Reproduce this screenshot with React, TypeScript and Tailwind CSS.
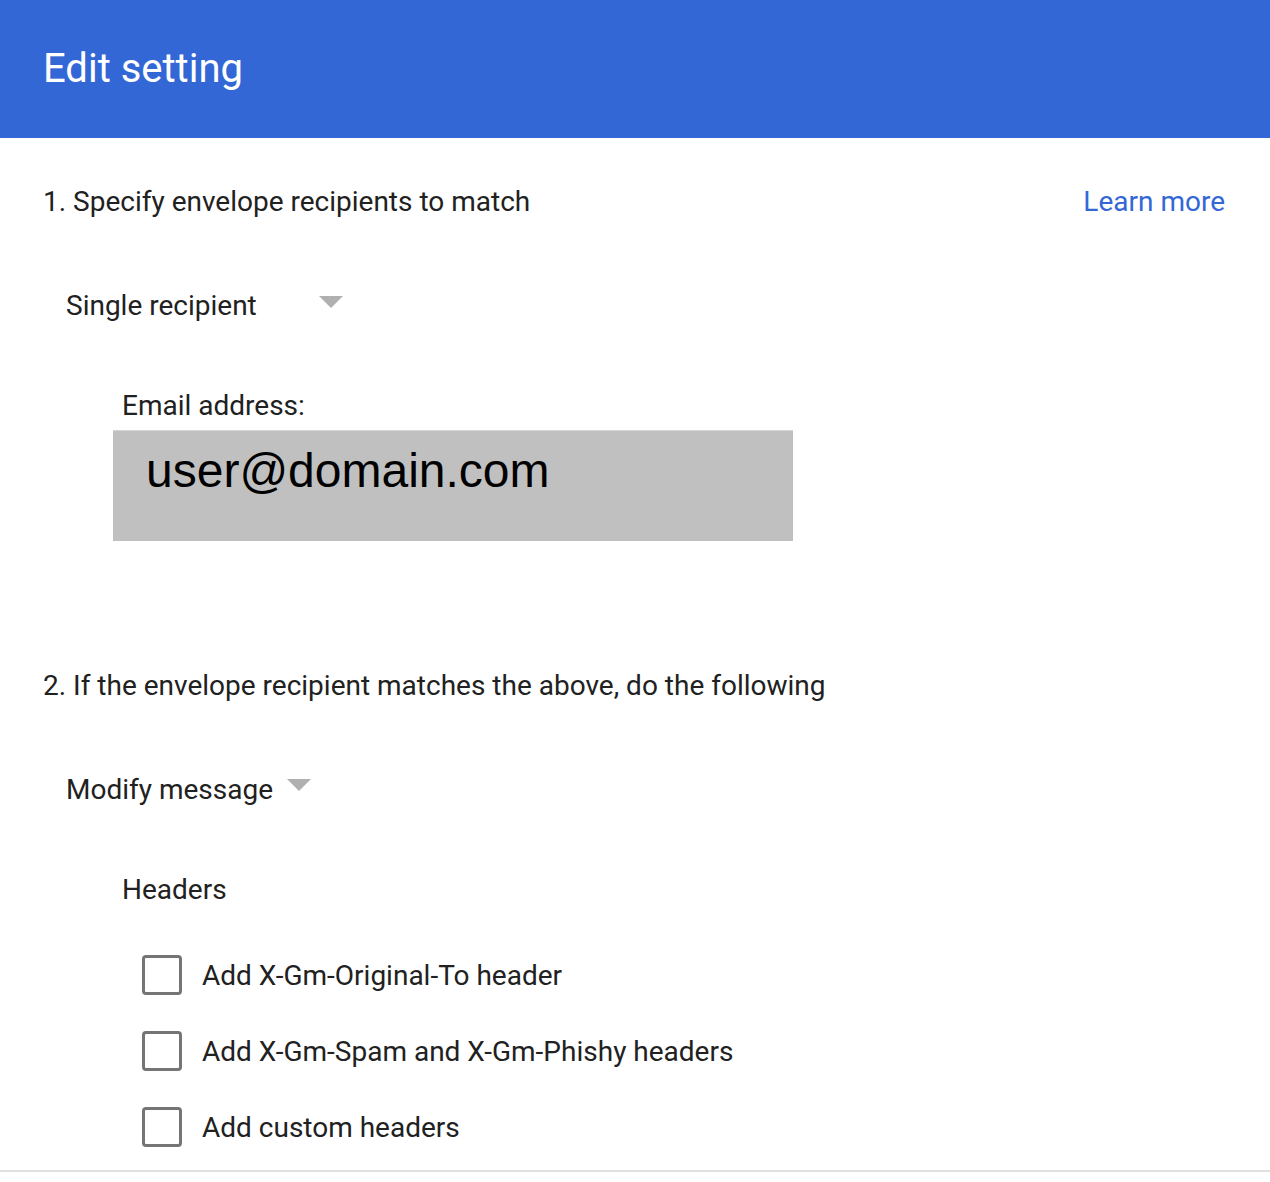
import React from "react";

function Caret() {
  return (
    <svg width="24" height="12" viewBox="0 0 24 12" className="shrink-0">
      <polygon points="0,0 24,0 12,12" fill="#b0b0b0" />
    </svg>
  );
}

function Check({ label }: { label: string }) {
  return (
    <div className="flex items-center h-[40px]">
      <div className="w-[40px] h-[40px] rounded-[4px] border-[3px] border-[#757575] bg-white shrink-0" />
      <span className="ml-[20px] text-[28px] leading-[32px] pt-[2px] text-[#212121]">{label}</span>
    </div>
  );
}

export default function App() {
  return (
    <div className="w-[1270px] h-[1182px] bg-white flex flex-col" style={{ fontFamily: "Roboto, 'Noto Sans', sans-serif" }}>
      <div className="h-[138px] bg-[#3367d6] flex items-center pl-[43px] shrink-0">
        <h1 className="text-[40px] leading-[48px] text-white font-normal">Edit setting</h1>
      </div>

      <div className="flex flex-col text-[#212121]">
        <div className="flex items-center justify-between pl-[43px] pr-[45px] mt-[48px]">
          <span className="text-[28px] leading-[32px]">1. Specify envelope recipients to match</span>
          <span className="text-[28px] leading-[32px] text-[#3367d6]">Learn more</span>
        </div>

        <div className="flex items-center justify-between w-[277px] ml-[66px] mt-[72px]">
          <span className="text-[28px] leading-[32px]">Single recipient</span>
          <span className="-mt-[8px]"><Caret /></span>
        </div>

        <div className="ml-[122px] mt-[68px] text-[28px] leading-[32px]">Email address:</div>
        <div className="ml-[113px] mt-[8px] w-[680px] h-[111px] bg-[#c0c0c0] border-t border-[#d6d6d6] pl-[33px] pt-[10px]">
          <span className="text-[48px] leading-[60px] text-black" style={{ fontFamily: "'Liberation Sans', Arial, sans-serif" }}>
            user@domain.com
          </span>
        </div>

        <div className="ml-[43px] mt-[129px] text-[28px] leading-[32px]">
          2. If the envelope recipient matches the above, do the following
        </div>

        <div className="flex items-center ml-[66px] mt-[72px]">
          <span className="text-[28px] leading-[32px]">Modify message</span>
          <span className="ml-[14px] -mt-[10px]"><Caret /></span>
        </div>

        <div className="ml-[122px] mt-[68px] text-[28px] leading-[32px]">Headers</div>

        <div className="ml-[142px] mt-[49px] flex flex-col gap-[36px]">
          <Check label="Add X-Gm-Original-To header" />
          <Check label="Add X-Gm-Spam and X-Gm-Phishy headers" />
          <Check label="Add custom headers" />
        </div>

        <div className="mt-[23px] h-[2px] bg-[#e0e0e0]" />
      </div>
    </div>
  );
}
